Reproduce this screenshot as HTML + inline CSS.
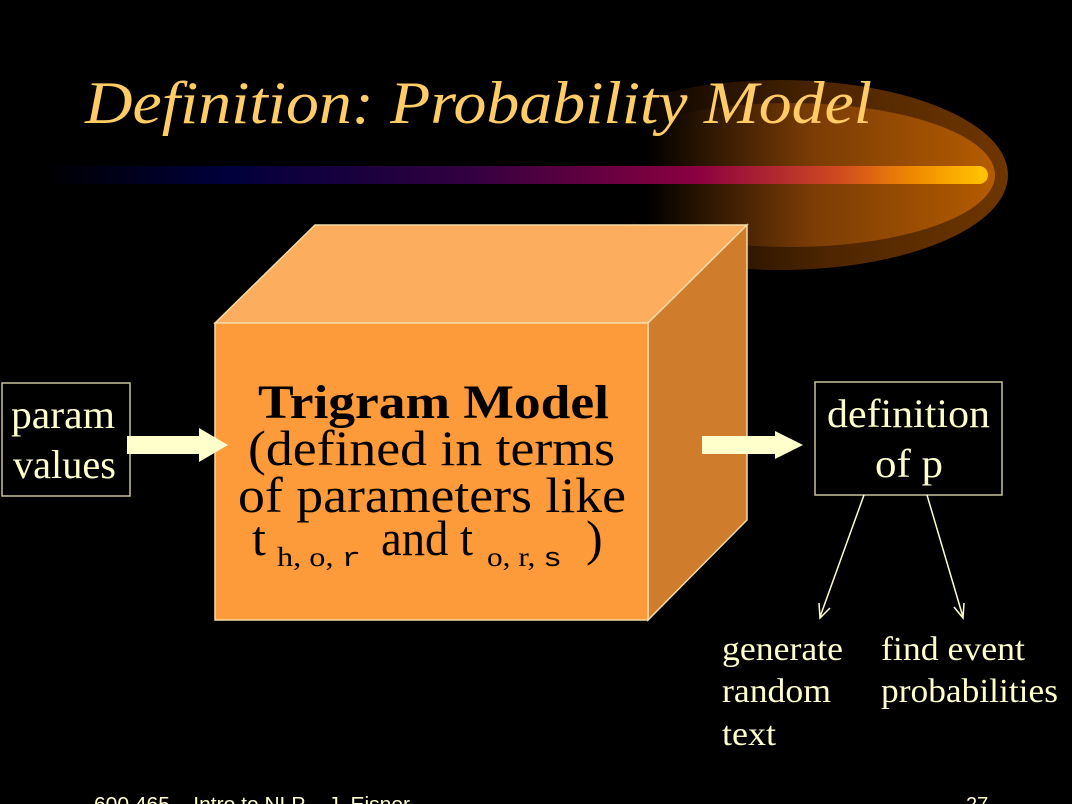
<!DOCTYPE html>
<html><head><meta charset="utf-8"><style>
html,body{margin:0;padding:0;background:#000;width:1072px;height:804px;overflow:hidden}
svg{display:block}
</style></head><body>
<svg width="1072" height="804" viewBox="0 0 1072 804" xmlns="http://www.w3.org/2000/svg">
<defs>
<linearGradient id="glowfade" x1="0" x2="1" y1="0" y2="0">
<stop offset="0" stop-color="#000"/>
<stop offset="0.15" stop-color="#000"/>
<stop offset="0.55" stop-color="#7a3c06"/>
<stop offset="1" stop-color="#b55c00"/>
</linearGradient>
<linearGradient id="glowfade2" x1="0" x2="1" y1="0" y2="0">
<stop offset="0" stop-color="#000"/>
<stop offset="0.15" stop-color="#000"/>
<stop offset="0.6" stop-color="#4d2500"/>
<stop offset="1" stop-color="#6e3600"/>
</linearGradient>
<linearGradient id="bar" x1="40" x2="980" y1="0" y2="0" gradientUnits="userSpaceOnUse">
<stop offset="0" stop-color="#000"/>
<stop offset="0.2" stop-color="#00003c"/>
<stop offset="0.45" stop-color="#300040"/>
<stop offset="0.7" stop-color="#8c0040"/>
<stop offset="0.85" stop-color="#d04a20"/>
<stop offset="0.93" stop-color="#f08a00"/>
<stop offset="1" stop-color="#ffc000"/>
</linearGradient>
</defs>
<ellipse cx="780" cy="175" rx="228" ry="95" fill="url(#glowfade2)"/>
<ellipse cx="790" cy="175" rx="205" ry="72" fill="url(#glowfade)"/>
<rect x="40" y="166" width="948" height="18" rx="9" fill="url(#bar)"/>
<text x="85" y="123" font-family="Liberation Serif, serif" font-style="italic" font-size="60" fill="#ffcc66" textLength="787" lengthAdjust="spacingAndGlyphs">Definition: Probability Model</text>

<polygon points="215,323 315,225 747,225 648,323" fill="#fcad5d" stroke="#f5dba6" stroke-width="1.5"/>
<polygon points="648,323 747,225 747,520 648,620" fill="#cf7d2c" stroke="#f5dba6" stroke-width="1.5"/>
<rect x="215" y="323" width="433" height="297" fill="#fd9a3a" stroke="#f5dba6" stroke-width="1.5"/>

<g font-family="Liberation Serif, serif" fill="#000">
<text x="258" y="418" font-size="48" font-weight="bold" textLength="351" lengthAdjust="spacingAndGlyphs">Trigram Model</text>
<text x="248" y="465" font-size="50" textLength="367" lengthAdjust="spacingAndGlyphs">(defined in terms</text>
<text x="238" y="512" font-size="50" textLength="388" lengthAdjust="spacingAndGlyphs">of parameters like</text>
<text x="252" y="555" font-size="50">t</text>
<text x="277" y="566" font-size="27" textLength="84" lengthAdjust="spacingAndGlyphs">h, o, <tspan font-family="Liberation Mono, monospace">r</tspan></text>
<text x="381" y="555" font-size="50" textLength="92" lengthAdjust="spacingAndGlyphs">and t</text>
<text x="487" y="566" font-size="27" textLength="75" lengthAdjust="spacingAndGlyphs">o, r, <tspan font-family="Liberation Mono, monospace">s</tspan></text>
<text x="586" y="555" font-size="50">)</text>
</g>

<rect x="2" y="383" width="128" height="113" fill="none" stroke="#c8c49a" stroke-width="1.5"/>
<rect x="815" y="382" width="187" height="113" fill="none" stroke="#c8c49a" stroke-width="1.5"/>
<g font-family="Liberation Serif, serif" fill="#ffffcc" font-size="40">
<text x="11" y="428" textLength="104" lengthAdjust="spacingAndGlyphs">param</text>
<text x="13" y="478" textLength="103" lengthAdjust="spacingAndGlyphs">values</text>
<text x="827" y="427" textLength="163" lengthAdjust="spacingAndGlyphs">definition</text>
<text x="875" y="477" textLength="68" lengthAdjust="spacingAndGlyphs">of p</text>
</g>

<polygon points="127,436 199,436 199,428 228,445 199,462 199,454 127,454" fill="#ffffcc"/>
<polygon points="702,436 775,436 775,431 803,445 775,459 775,454 702,454" fill="#ffffcc"/>

<g stroke="#ffffcc" stroke-width="1.5" fill="none">
<line x1="864" y1="495" x2="820" y2="617"/>
<polyline points="819,603 820,618 830,608"/>
<line x1="927" y1="495" x2="963" y2="617"/>
<polyline points="954,607 963,618 964,603"/>
</g>

<g font-family="Liberation Serif, serif" fill="#ffffcc" font-size="34">
<text x="722" y="660" textLength="121" lengthAdjust="spacingAndGlyphs">generate</text>
<text x="722" y="702" textLength="109" lengthAdjust="spacingAndGlyphs">random</text>
<text x="722" y="745" textLength="54" lengthAdjust="spacingAndGlyphs">text</text>
<text x="881" y="660" textLength="144" lengthAdjust="spacingAndGlyphs">find event</text>
<text x="881" y="702" textLength="177" lengthAdjust="spacingAndGlyphs">probabilities</text>
</g>
<g font-family="Liberation Sans, sans-serif" fill="#ffffcc" font-size="20">
<text x="94" y="811" textLength="316" lengthAdjust="spacingAndGlyphs">600.465 – Intro to NLP – J. Eisner</text>
<text x="966" y="811">27</text>
</g>
</svg>
</body></html>
